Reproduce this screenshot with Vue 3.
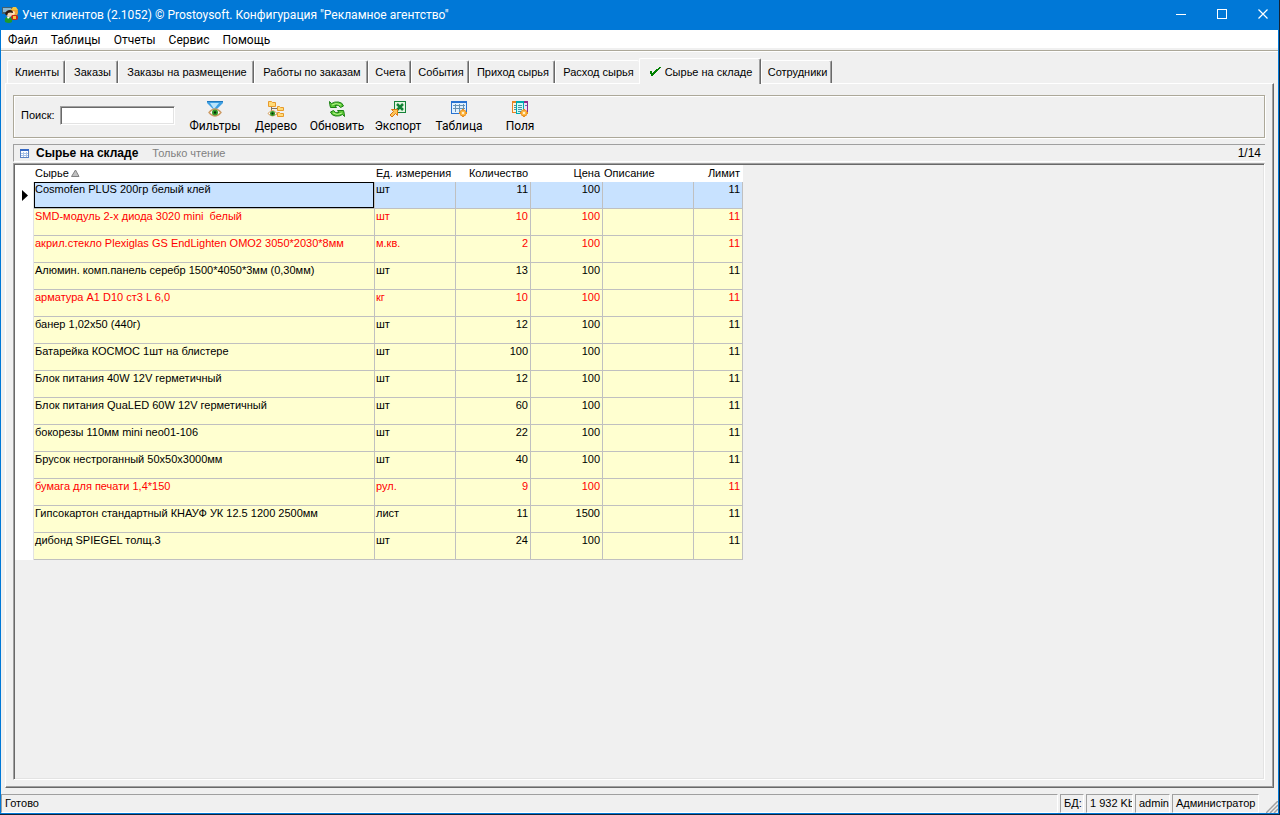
<template>
<div class="window">
    <header class="titlebar">
        <svg class="app-icon" width="18" height="18" viewBox="0 0 18 18">
            <rect x="1" y="1" width="11" height="7" fill="#43606f" />
            <rect x="2" y="2" width="8" height="4" fill="#8bb7cf" />
            <circle cx="13" cy="6" r="4" fill="#f0a63c" />
            <path d="M10 4h7l-2-3h-3z" fill="#f5c53d" />
            <circle cx="12" cy="7" r="2" fill="#ffe1b8" />
            <rect x="10" y="9" width="7" height="5" rx="2" fill="#c8261b" />
            <rect x="12" y="10" width="3" height="3" fill="#f5c53d" />
            <circle cx="8" cy="8" r="3" fill="#f2d3b2" />
            <path d="M4 8q1-4 5-4q3 0 3 3q-3-1-5 0l-1 3z" fill="#30190f" />
            <path d="M4 16q-1-5 3-5q5 0 4 5q-3 2-7 0z" fill="#1f9a2c" />
            <path d="M6 11l1 2l2-2z" fill="#fff" />
        </svg>
        <h1>Учет клиентов (2.1052) © Prostoysoft. Конфигурация "Рекламное агентство"</h1>
        <div class="window-buttons">
            <button aria-label="Свернуть">
                <svg width="11" height="11" viewBox="0 0 11 11"><path d="M0 5.5h10" stroke="#fff" /></svg>
            </button>
            <button aria-label="Развернуть">
                <svg width="11" height="11" viewBox="0 0 11 11"><rect x="0.5" y="0.5" width="9" height="9" fill="none" stroke="#fff" /></svg>
            </button>
            <button aria-label="Закрыть">
                <svg width="11" height="11" viewBox="0 0 11 11"><path d="M0.5 0.5l9 9M9.5 0.5l-9 9" stroke="#fff" stroke-width="1.2" /></svg>
            </button>
        </div>
    </header>

    <nav class="menu">
        <button v-for="item in menu" :key="item">{{ item }}</button>
    </nav>

    <main class="content">
        <div class="tabs" role="tablist">
            <button
                v-for="(tab, i) in tabs"
                :key="tab.name"
                role="tab"
                class="tab"
                :class="{ active: i === activeTab, before: i === activeTab - 1 }"
                :aria-selected="i === activeTab"
                :style="{ width: tab.width + 'px' }"
                @click="activeTab = i"
            >
                <svg v-if="i === activeTab" width="11" height="10" viewBox="0 0 11 10">
                    <path d="M0 4h2v2h1v-1h1v-1h1v-1h1v-1h2v-1h1v-1h2v1h-1v1h-1v1h-1v1h-1v1h-1v1h-1v1h-1v1h-1v1h-2v-2h-1z" fill="#008000" />
                </svg>
                <span>{{ tab.name }}</span>
            </button>
        </div>

        <section class="panel">
            <div class="toolbar">
                <label for="search">Поиск:</label>
                <input id="search" v-model="search" type="text" />
                <div class="tools">
                    <button v-for="tool in tools" :key="tool.icon">
                        <svg v-if="tool.icon === 'filter'" width="18" height="18" viewBox="0 0 18 18">
                            <path d="M1 1h16v2l-6 6h-4l-6-6z" fill="#3f9fe2" />
                            <path d="M4 3h9l-5 6z" fill="#b9e4fb" />
                            <path d="M1 1.5h16" stroke="#1d77bd" />
                            <path d="M3 12.5q6-7 12 0q-6 7-12 0z" fill="#fff" stroke="#ce9c65" stroke-width="1.3" />
                            <circle cx="9" cy="12.5" r="3" fill="#329b27" />
                            <circle cx="9" cy="12.5" r="1.2" fill="#072b06" />
                        </svg>
                        <svg v-else-if="tool.icon === 'tree'" width="18" height="18" viewBox="0 0 18 18">
                            <path d="M4.5 6v8h7M4.5 8.5h7" fill="none" stroke="#80715b" />
                            <path d="M1.5 1.5h3l1 1h3v4h-7zM10.5 6.5h2l1 1h3v3h-6zM10.5 12.5h2l1 1h3v3h-6z" fill="#ffdb78" stroke="#e89a2c" />
                            <path d="M1 13.5q4.500-6 9 0q-4.500 5-9 0z" fill="#fff" stroke="#d39b55" />
                            <circle cx="5.5" cy="13.5" r="2.5" fill="#329b27" />
                            <circle cx="5.5" cy="13.5" r="1" fill="#072b06" />
                        </svg>
                        <svg v-else-if="tool.icon === 'refresh'" width="18" height="18" viewBox="0 0 18 18">
                            <path d="M1.5 1.5l2 2q3-2 7-1.5q4 .5 5 4l-3 1.5q-2-3.500-5.500-2l1.500 2h-6q-1-3-1-6z" fill="#5cc936" stroke="#1b7f14" />
                            <path d="M16.5 16.5l-2-2q-3 2-7 1.5q-4-.5-5-4l3-1.5q2 3.500 5.500 2l-1.500-2h6q1 3 1 6z" fill="#5cc936" stroke="#1b7f14" />
                            <path d="M4 5q4-3 9 0M5 13q4 3 9 0" fill="none" stroke="#b7f18c" />
                        </svg>
                        <svg v-else-if="tool.icon === 'export'" width="18" height="18" viewBox="0 0 18 18">
                            <rect x="5.5" y="1.5" width="11" height="11" fill="#e4f5e1" stroke="#168239" />
                            <path d="M8 4l6 6M14 4l-6 6" stroke="#118235" stroke-width="2.5" />
                            <path d="M2.5 9.5h6v6l-2-2l-3.5 3.5l-2-2l3.5-3.5z" fill="#ffc457" stroke="#d97813" />
                        </svg>
                        <svg v-else-if="tool.icon === 'table'" width="18" height="18" viewBox="0 0 18 18">
                            <rect x="1.5" y="1.5" width="15" height="12" fill="#e1f1ff" stroke="#2873d2" />
                            <path d="M1 2h16" stroke="#2873d2" stroke-width="2" />
                            <path d="M3 5.5h12M3 8.5h12M5.5 4v8M9.5 4v8M13.5 4v8" stroke="#6793b4" />
                            <path d="M13 9v8M9 13h8M10.500 10.500l5 5M15.500 10.500l-5 5" stroke="#e98b1c" stroke-width="2" />
                            <circle cx="13" cy="13" r="2.5" fill="#ffbd48" />
                            <circle cx="13" cy="13" r="1" fill="#fff" />
                        </svg>
                        <svg v-else width="18" height="18" viewBox="0 0 18 18">
                            <rect x="1.5" y="1.5" width="5" height="11" fill="#fff3dd" stroke="#e98422" />
                            <rect x="11.5" y="1.5" width="5" height="11" fill="#f4dff4" stroke="#8c2b91" />
                            <rect x="5.5" y="1.5" width="7" height="12" fill="#c7fbfa" stroke="#00a9b0" />
                            <path d="M1 2h5" stroke="#e98422" stroke-width="2" />
                            <path d="M12 2h5" stroke="#8c2b91" stroke-width="2" />
                            <path d="M5 2h8" stroke="#00a9b0" stroke-width="2" />
                            <path d="M3 5.5h2M3 7.5h2M3 9.5h2M7 5.5h4M7 7.5h4M7 9.5h4M7 11.5h3M14 5.5h2" stroke="#4f8d9f" />
                            <path d="M13 9v8M9 13h8M10.500 10.500l5 5M15.500 10.500l-5 5" stroke="#e98b1c" stroke-width="2" />
                            <circle cx="13" cy="13" r="2.5" fill="#ffbd48" />
                            <circle cx="13" cy="13" r="1" fill="#fff" />
                        </svg>
                        <span>{{ tool.label }}</span>
                    </button>
                </div>
            </div>

            <div class="caption">
                <svg width="9" height="9" viewBox="0 0 9 9">
                    <rect x="0.5" y="0.5" width="8" height="8" fill="#fff" stroke="#5c83c4" />
                    <path d="M0 1h9" stroke="#3568c4" stroke-width="2" />
                    <path d="M1 4.5h7M1 6.5h7M3.5 3v5M6.5 3v5" stroke="#a8c2e8" />
                </svg>
                <h2>Сырье на складе</h2>
                <span class="readonly">Только чтение</span>
                <span class="counter">1/14</span>
            </div>

            <div class="grid">
                <table>
                    <colgroup>
                        <col class="col-mark" />
                        <col class="col-name" />
                        <col class="col-unit" />
                        <col class="col-qty" />
                        <col class="col-price" />
                        <col class="col-note" />
                        <col class="col-limit" />
                    </colgroup>
                    <thead>
                        <tr>
                            <th></th>
                            <th>Сырье<svg class="sort" width="9" height="8" viewBox="0 0 9 8"><path d="M4.5 1l3.5 6.5h-7.5z" fill="#c0c0c0" stroke="#808080" /></svg></th>
                            <th>Ед. измерения</th>
                            <th class="num">Количество</th>
                            <th class="num">Цена</th>
                            <th>Описание</th>
                            <th class="num">Лимит</th>
                        </tr>
                    </thead>
                    <tbody>
                        <tr
                            v-for="(row, i) in rows"
                            :key="row.name"
                            :class="{ selected: i === selected, low: row.qty < row.limit }"
                            @click="selected = i"
                        >
                            <td class="mark">
                                <svg v-if="i === selected" width="6" height="11" viewBox="0 0 6 11"><path d="M0 0l6 5.5l-6 5.5z" fill="#000" /></svg>
                            </td>
                            <td class="name">{{ row.name }}</td>
                            <td>{{ row.unit }}</td>
                            <td class="num">{{ row.qty }}</td>
                            <td class="num">{{ row.price }}</td>
                            <td></td>
                            <td class="num">{{ row.limit }}</td>
                        </tr>
                    </tbody>
                </table>
            </div>
        </section>
    </main>

    <footer class="status">
        <span class="message">Готово</span>
        <span class="db">БД:</span>
        <span class="size">1 932 Kb</span>
        <span class="user">admin</span>
        <span class="role">Администратор</span>
        <svg width="12" height="12" viewBox="0 0 12 12">
            <path d="M0 12L12 0M4 12l8-8M8 12l4-4" stroke="#a0a0a0" stroke-width="1.5" />
        </svg>
    </footer>
</div>
</template>

<script setup>
import { ref } from 'vue'

const search = ref('')
const activeTab = ref(8)
const selected = ref(0)

const menu = ['Файл', 'Таблицы', 'Отчеты', 'Сервис', 'Помощь']

const tabs = [
    { name: 'Клиенты', width: 58 },
    { name: 'Заказы', width: 53 },
    { name: 'Заказы на размещение', width: 136 },
    { name: 'Работы по заказам', width: 114 },
    { name: 'Счета', width: 43 },
    { name: 'События', width: 58 },
    { name: 'Приход сырья', width: 86 },
    { name: 'Расход сырья', width: 84 },
    { name: 'Сырье на складе', width: 122 },
    { name: 'Сотрудники', width: 71 },
]

const tools = [
    { icon: 'filter', label: 'Фильтры' },
    { icon: 'tree', label: 'Дерево' },
    { icon: 'refresh', label: 'Обновить' },
    { icon: 'export', label: 'Экспорт' },
    { icon: 'table', label: 'Таблица' },
    { icon: 'fields', label: 'Поля' },
]

const rows = [
    { name: 'Cosmofen PLUS 200гр белый клей', unit: 'шт', qty: 11, price: 100, limit: 11 },
    { name: 'SMD-модуль 2-х диода 3020 mini  белый', unit: 'шт', qty: 10, price: 100, limit: 11 },
    { name: 'акрил.стекло Plexiglas GS EndLighten OMO2 3050*2030*8мм', unit: 'м.кв.', qty: 2, price: 100, limit: 11 },
    { name: 'Алюмин. комп.панель серебр 1500*4050*3мм (0,30мм)', unit: 'шт', qty: 13, price: 100, limit: 11 },
    { name: 'арматура А1 D10 ст3 L 6,0', unit: 'кг', qty: 10, price: 100, limit: 11 },
    { name: 'банер 1,02х50 (440г)', unit: 'шт', qty: 12, price: 100, limit: 11 },
    { name: 'Батарейка КОСМОС 1шт на блистере', unit: 'шт', qty: 100, price: 100, limit: 11 },
    { name: 'Блок питания 40W 12V герметичный', unit: 'шт', qty: 12, price: 100, limit: 11 },
    { name: 'Блок питания QuaLED 60W 12V герметичный', unit: 'шт', qty: 60, price: 100, limit: 11 },
    { name: 'бокорезы 110мм mini neo01-106', unit: 'шт', qty: 22, price: 100, limit: 11 },
    { name: 'Брусок нестроганный 50х50х3000мм', unit: 'шт', qty: 40, price: 100, limit: 11 },
    { name: 'бумага для печати 1,4*150', unit: 'рул.', qty: 9, price: 100, limit: 11 },
    { name: 'Гипсокартон стандартный КНАУФ УК 12.5 1200 2500мм', unit: 'лист', qty: 11, price: 1500, limit: 11 },
    { name: 'дибонд SPIEGEL толщ.3', unit: 'шт', qty: 24, price: 100, limit: 11 },
]
</script>

<style>
body {
    margin: 0;
    background: #10243a;
}
</style>

<style scoped>
* {
    box-sizing: border-box;
}

.window {
    display: flex;
    flex-direction: column;
    min-height: calc(100vh - 1px);
    margin: 0 1px 1px 0;
    border: 1px solid #0078d7;
    border-top: none;
    background: #f0f0f0;
    color: #000;
    font-family: "Liberation Sans", Arial, sans-serif;
    font-size: 11px;
    line-height: 13px;
}

button {
    margin: 0;
    padding: 0;
    border: none;
    background: none;
    color: inherit;
    font: inherit;
}

.titlebar {
    display: flex;
    align-items: center;
    height: 30px;
    background: #0078d7;
    color: #fff;
}

.titlebar h1 {
    flex: 1;
    margin: 0 0 0 3px;
    font: 12px/16px Roboto, "Noto Sans", sans-serif;
}

.window-buttons {
    display: flex;
}

.window-buttons button {
    width: 41px;
    height: 28px;
    padding: 0 0 2px 11px;
}

.window-buttons svg {
    display: block;
    margin: 0 auto;
}

.menu {
    display: flex;
    gap: 13px;
    height: 18px;
    padding-left: 7px;
    background: #fff;
}

.menu button {
    font: 12px/20px Roboto, "Noto Sans", sans-serif;
}

.content {
    flex: 1;
    display: flex;
    flex-direction: column;
    margin-top: 2px;
    padding: 7px 4px 6px;
    border-top: 1px solid #aca899;
    box-shadow: inset 0 1px #fff;
}

.tabs {
    display: flex;
    align-items: flex-end;
    height: 25px;
    padding-left: 2px;
}

.tab {
    display: flex;
    align-items: center;
    justify-content: center;
    gap: 4px;
    height: 23px;
    padding: 1px 0 0 2px;
    border-top: 1px solid #fff;
    border-left: 1px solid #fff;
    border-right: 1px solid #696969;
    border-radius: 2px 2px 0 0;
    box-shadow: inset -1px 0 #a0a0a0;
    white-space: nowrap;
}

.tab.before {
    border-right: none;
    box-shadow: none;
}

.tab.active {
    height: 26px;
    margin-bottom: -1px;
    background: #f0f0f0;
    z-index: 1;
}

.panel {
    flex: 1;
    display: flex;
    flex-direction: column;
    padding: 11px 8px 7px 7px;
    border: 1px solid #fff;
    border-right-color: #696969;
    border-bottom-color: #696969;
    box-shadow: inset -1px -1px #a0a0a0;
}

.toolbar {
    display: flex;
    align-items: center;
    height: 43px;
    padding-left: 7px;
    border: 1px solid #aca899;
    box-shadow: inset 1px 1px #fff, 1px 1px #fff;
}

.toolbar input {
    width: 115px;
    height: 19px;
    margin: 0 10px 2px 5px;
    padding: 1px 2px;
    border: 1px solid #a0a0a0;
    border-right-color: #fff;
    border-bottom-color: #fff;
    border-radius: 0;
    outline: none;
    background: #fff;
    box-shadow: inset 1px 1px #696969, inset -1px -1px #e3e3e3;
    font: inherit;
}

.toolbar label {
    padding-bottom: 2px;
}

.tools {
    display: flex;
}

.tools button {
    display: flex;
    flex-direction: column;
    align-items: center;
    width: 61px;
    font: 12px/16px Roboto, "Noto Sans", sans-serif;
}

.caption {
    display: flex;
    align-items: center;
    height: 18px;
    margin-top: 6px;
    padding: 0 4px 0 6px;
    border-top: 1px solid #a0a0a0;
    border-left: 1px solid #a0a0a0;
    border-bottom: 1px solid #fff;
}

.caption h2 {
    margin: 0 14px 0 7px;
    font-size: 12px;
    line-height: 14px;
}

.readonly {
    color: #808080;
}

.counter {
    margin-left: auto;
    font-size: 12px;
}

.grid {
    flex: 1;
    margin-top: 1px;
    border: 1px solid #a0a0a0;
    border-right-color: #fff;
    border-bottom-color: #fff;
    box-shadow: inset 1px 1px #696969, inset -1px -1px #e3e3e3;
    padding: 1px;
}

table {
    width: 728px;
    table-layout: fixed;
    border-collapse: separate;
    border-spacing: 0;
}

.col-mark { width: 19px; }
.col-name { width: 341px; }
.col-unit { width: 81px; }
.col-qty { width: 75px; }
.col-price { width: 72px; }
.col-note { width: 91px; }
.col-limit { width: 49px; }

th {
    height: 17px;
    padding: 1px;
    background: #fff;
    font-weight: normal;
    text-align: left;
    white-space: nowrap;
}

th.num {
    padding-right: 3px;
}

.num {
    text-align: right;
}

.sort {
    margin-left: 2px;
}

td {
    height: 27px;
    padding: 1px 2px 1px 1px;
    border-right: 1px solid #c0c0c0;
    border-bottom: 1px solid #c0c0c0;
    background: #ffffd0;
    vertical-align: top;
    white-space: pre;
}

.low td {
    color: #f00;
}

.selected td {
    background: #c8e2ff;
}

.selected .name {
    box-shadow: inset 0 0 0 1px #000;
}

.selected td.mark,
td.mark {
    padding: 8px 0 0 7px;
    border-right-color: #e3e3e3;
    border-bottom: none;
    background: #fff;
}

.mark svg {
    display: block;
}

.status {
    display: flex;
    align-items: stretch;
    gap: 2px;
    height: 19px;
}

.status span {
    padding: 1px 3px;
    border-top: 1px solid #a0a0a0;
    border-left: 1px solid #a0a0a0;
    border-right: 1px solid #fff;
    border-bottom: 1px solid #fff;
    line-height: 14px;
    white-space: nowrap;
    overflow: hidden;
}

.status .message {
    flex: 1;
}

.db { width: 24px; }
.size { width: 47px; }
.user { width: 35px; }
.role { width: 87px; }

.status svg {
    align-self: flex-end;
    margin-left: 5px;
}
</style>
